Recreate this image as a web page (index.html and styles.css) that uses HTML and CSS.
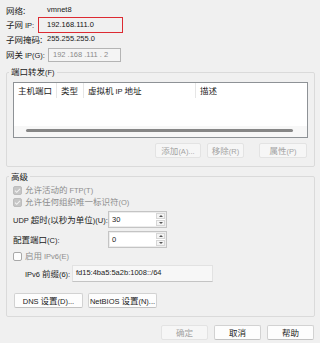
FILE: index.html
```html
<!DOCTYPE html>
<html lang="zh-CN">
  <head>
    <meta charset="UTF-8" />
    <title>VMnet8 NAT 设置</title>
    <link rel="stylesheet" href="styles.css">
  </head>
  <body>
    <div class="dlg">
      <!-- Network summary -->
      <div class="info">
        <div class="row r1">
          <span class="key">网络:</span>
          <span class="val en">vmnet8</span>
        </div>
        <div class="row r2">
          <span class="key">子网 <span class="en">IP:</span></span>
          <span class="hl en">192.168.111.0</span>
        </div>
        <div class="row r3">
          <span class="key">子网掩码:</span>
          <span class="val en">255.255.255.0</span>
        </div>
        <div class="row r4">
          <span class="key">网关 <span class="en">IP(G):</span></span>
          <span class="ipbox en">192 .168 .111 . 2</span>
        </div>
      </div>

      <!-- Port forwarding -->
      <fieldset class="grp ports">
        <legend>端口转发<span class="en">(F)</span></legend>
        <div class="list">
          <div class="list-head">
            <span class="col c1">主机端口</span>
            <span class="col c2">类型</span>
            <span class="col c3">虚拟机 <span class="en">IP</span> 地址</span>
            <span class="col c4">描述</span>
          </div>
          <div class="list-body"></div>
          <div class="hscroll"><div class="thumb"></div></div>
        </div>
        <div class="btn-row">
          <button class="btn off b-add">添加<span class="en">(A)...</span></button>
          <button class="btn off b-del">移除<span class="en">(R)</span></button>
          <button class="btn off b-prop">属性<span class="en">(P)</span></button>
        </div>
      </fieldset>

      <!-- Advanced -->
      <fieldset class="grp adv">
        <legend>高级</legend>
        <div class="check off cb1">
          <svg class="box" viewBox="0 0 9 9"><rect x=".5" y=".5" width="8" height="8" rx="1.5" fill="#c6c6c6" stroke="#bdbdbd"/><path d="M2 4.7l1.7 1.6L7 2.9" stroke="#f2f2f2" fill="none" stroke-width="1.1"/></svg>
          <span>允许活动的 <span class="en">FTP(T)</span></span>
        </div>
        <div class="check off">
          <svg class="box" viewBox="0 0 9 9"><rect x=".5" y=".5" width="8" height="8" rx="1.5" fill="#c6c6c6" stroke="#bdbdbd"/><path d="M2 4.7l1.7 1.6L7 2.9" stroke="#f2f2f2" fill="none" stroke-width="1.1"/></svg>
          <span>允许任何组织唯一标识符<span class="en">(O)</span></span>
        </div>
        <div class="field f-udp">
          <span class="flabel"><span class="en">UDP</span> 超时<span class="en">(</span>以秒为单位<span class="en">)(U):</span></span>
          <div class="spinbox">
            <span class="en">30</span>
            <div class="spin"><i class="up"></i><i class="down"></i></div>
          </div>
        </div>
        <div class="field f-port">
          <span class="flabel">配置端口<span class="en">(C):</span></span>
          <div class="spinbox">
            <span class="en">0</span>
            <div class="spin"><i class="up"></i><i class="down"></i></div>
          </div>
        </div>
        <div class="check off cb3">
          <svg class="box" viewBox="0 0 9 9"><rect x=".5" y=".5" width="8" height="8" rx="1.5" fill="#fdfdfd" stroke="#a8a8a8"/></svg>
          <span>启用 <span class="en">IPv6(E)</span></span>
        </div>
        <div class="field f-v6">
          <span class="flabel"><span class="en">IPv6</span> 前缀<span class="en">(6):</span></span>
          <span class="prefix en">fd15:4ba5:5a2b:1008::/64</span>
        </div>
        <div class="btn-row left">
          <button class="btn b-dns"><span class="en">DNS</span> 设置<span class="en">(D)...</span></button>
          <button class="btn b-nb"><span class="en">NetBIOS</span> 设置<span class="en">(N)...</span></button>
        </div>
      </fieldset>

      <!-- Dialog buttons -->
      <div class="btn-row footer">
        <button class="btn off">确定</button>
        <button class="btn">取消</button>
        <button class="btn">帮助</button>
      </div>
    </div>
  </body>
</html>
```

FILE: styles.css
```css
* {
  margin: 0;
  padding: 0;
  box-sizing: border-box;
}

body {
  width: 320px;
  height: 343px;
  overflow: hidden;
  background-color: #f0f0f0;
  color: #222;
  font-family: "Noto Sans CJK SC", sans-serif;
  font-size: 8.5px;
  line-height: 12px;
}

.en {
  font-family: "Liberation Sans", sans-serif;
  font-size: 7.5px;
}

.dlg {
  padding-top: 3px;
}

/* Summary rows */
.info {
  padding-left: 6px;
}

.row {
  display: flex;
  align-items: center;
  white-space: nowrap;
}

.key {
  width: 32px;
  flex-shrink: 0;
}

.r1 {
  height: 14px;
}

.r2 {
  height: 16px;
}

.r3 {
  height: 12px;
}

.r4 {
  height: 14px;
  margin-top: 3px;
}

.val {
  padding-left: 9px;
}

.hl {
  width: 85px;
  height: 16px;
  border: 1px solid #dc2a32;
  padding-left: 8px;
  line-height: 14px;
  color: #111;
}

.ipbox {
  margin-left: 10px;
  width: 73px;
  height: 14px;
  border: 1px solid #b4b4b4;
  background-color: #f4f4f4;
  color: #8a8a8a;
  padding-left: 4px;
  line-height: 12px;
}

/* Group boxes */
.grp {
  margin: 3px 0 0 6px;
  width: 309px;
  border: 1px solid #dadada;
  border-radius: 2px;
  padding: 0;
}

.grp legend {
  margin-left: 2px;
  padding: 0 2px;
  line-height: 12px;
}

.ports {
  padding-bottom: 8px;
}

.list {
  margin: 3px 0 0 6px;
  width: 295px;
  height: 56px;
  border: 1px solid #8e9296;
  background-color: #fff;
  display: flex;
  flex-direction: column;
}

.list-head {
  display: flex;
  height: 15px;
  line-height: 15px;
}

.col {
  padding-left: 4px;
  border-right: 1px solid #e6e6e6;
  white-space: nowrap;
}

.c1 { width: 43px; }
.c2 { width: 27px; }
.c3 { width: 112px; }
.c4 { flex: 1; border-right: none; }

.list-body {
  flex: 1;
}

.hscroll {
  height: 11px;
  background-color: #f7f7f7;
  padding: 3px 0 0 12px;
}

.thumb {
  width: 267px;
  height: 3px;
  border-radius: 2px;
  background-color: #868686;
}

/* Buttons */
.btn-row {
  display: flex;
  justify-content: flex-end;
}

.btn {
  height: 15px;
  border: 1px solid #d2d2d2;
  border-bottom-color: #c2c2c2;
  border-radius: 2px;
  background-color: #fdfdfd;
  color: #222;
  font-family: "Noto Sans CJK SC", sans-serif;
  font-size: 8.5px;
  line-height: 13px;
  white-space: nowrap;
}

.btn.off {
  color: #a3a3a3;
  background-color: #f6f6f6;
  border-color: #e3e3e3;
}

.ports .btn-row {
  margin: 5px 7px 0 0;
}

.b-add { width: 46px; }
.b-del { width: 37px; margin-left: 6px; }
.b-prop { width: 48px; margin-left: 15px; }

/* Advanced */
.adv {
  padding-bottom: 8px;
}

.check {
  display: flex;
  align-items: center;
  height: 12px;
  margin-left: 6px;
  white-space: nowrap;
}

.check.off {
  color: #8d8d8d;
}

.cb1 {
  margin-top: 2px;
}

.cb3 {
  margin-top: 2px;
}

.box {
  width: 9px;
  height: 9px;
  margin-right: 3px;
  flex-shrink: 0;
}

.field {
  display: flex;
  align-items: center;
  height: 17px;
  margin: 3px 0 0 6px;
  white-space: nowrap;
}

.flabel {
  width: 95px;
  flex-shrink: 0;
}

.spinbox {
  width: 59px;
  height: 17px;
  border: 1px solid #c4c4c4;
  background-color: #fff;
  display: flex;
  align-items: center;
  padding-left: 3px;
  box-shadow: inset 0 0 0 1px #ededed;
}

.spinbox .en {
  flex: 1;
}

.spin {
  width: 10px;
  height: 15px;
  display: flex;
  flex-direction: column;
  gap: 1px;
  padding: 1px 1px 1px 0;
}

.spin i {
  flex: 1;
  border: 1px solid #d6d6d6;
  background-color: #f4f4f4;
  position: relative;
}

.spin i::after {
  content: "";
  position: absolute;
  left: 2px;
  top: 1px;
  border-left: 2px solid transparent;
  border-right: 2px solid transparent;
}

.spin .up::after {
  border-bottom: 2px solid #555;
}

.spin .down::after {
  border-top: 2px solid #555;
}

.f-v6 {
  margin-left: 18px;
}

.f-v6 .flabel {
  width: 47px;
}

.prefix {
  width: 141px;
  height: 17px;
  border: 1px solid #e2e2e2;
  border-bottom-color: #c4c4c4;
  background-color: #f7f7f7;
  padding-left: 3px;
  line-height: 14px;
}

.btn-row.left {
  justify-content: flex-start;
  margin: 11px 0 0 7px;
}

.b-dns,
.b-nb {
  width: 69px;
}

.b-nb {
  margin-left: 5px;
}

.footer {
  margin: 8px 6px 0 0;
}

.footer .btn {
  width: 47px;
}

.footer .btn + .btn {
  margin-left: 6px;
}
```
